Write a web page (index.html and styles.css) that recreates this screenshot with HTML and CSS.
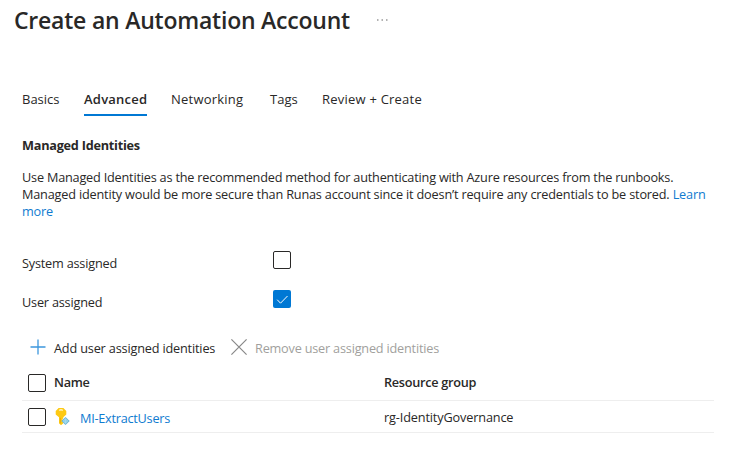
FILE: index.html
```html
<!DOCTYPE html>
<html lang="en">
<head>
<meta charset="utf-8">
<title>Create an Automation Account</title>
<link rel="stylesheet" href="styles.css">
</head>
<body>
<header class="header">
  <h1 class="title">Create an Automation Account</h1>
  <svg class="more" width="12" height="3" viewBox="0 0 12 3"><path d="M1 1h1.500M5.500 1h1.500M10 1h1.500" stroke="#666" stroke-width="1.2"/></svg>
</header>
<nav class="tabs">
  <a class="tab basics">Basics</a>
  <a class="tab advanced">Advanced</a>
  <a class="tab networking">Networking</a>
  <a class="tab tags">Tags</a>
  <a class="tab review">Review + Create</a>
</nav>
<main class="content">
  <h2 class="section-title">Managed Identities</h2>
  <p class="intro">Use Managed Identities as the recommended method for authenticating with Azure resources from the runbooks.<br><span class="line-two">Managed identity would be more secure than Runas account since it doesn’t require any credentials to be stored. <a class="link">Learn</a></span><br><a class="link">more</a></p>
  <div class="field"><span class="field-label">System assigned</span><span class="checkbox"></span></div>
  <div class="field"><span class="field-label">User assigned</span><span class="checkbox checked"><svg width="18" height="18" viewBox="0 0 18 18"><path d="M4.200 9.700l3.300 3.500 7-7.200" fill="none" stroke="#fff" stroke-width="1"/></svg></span></div>
  <div class="toolbar">
    <svg width="16" height="16" viewBox="0 0 16 16"><path d="M8 .5v15M.5 8h15" stroke="#3c97dd" stroke-width="1.3"/></svg>
    <span class="add">Add user assigned identities</span>
    <svg width="16" height="16" viewBox="0 0 16 16"><path d="M.4.4l15.200 15.200M15.600.4L.4 15.600" stroke="#888" stroke-width="1.2"/></svg>
    <span class="remove">Remove user assigned identities</span>
  </div>
  <div class="grid">
    <div class="row head">
      <span class="checkbox"></span>
      <span class="name">Name</span>
      <span class="group">Resource group</span>
    </div>
    <div class="row">
      <span class="checkbox"></span>
      <span class="name">
        <svg class="key" width="15" height="19" viewBox="0 0 15 19"><path d="M3.600 1h4.800L11.300 4v3.500L8.300 10.300v1l-1 1 1 1.100-1 1 .8 1v1L6 18.200l-2-2V10.300L.7 7.500V4z" fill="#fdc913"/><path d="M4.200 3.600q1.800-1.700 3.600 0" stroke="#fff4bd" stroke-width="1.4" fill="none"/><path d="M5.400 10.800v5.700" stroke="#e9a80b" stroke-width=".9"/><path d="M10.500 10l4.200 4-4.200 4-4.200-4z" fill="#6db6d6"/><path d="M10.500 11.600l2.400 2.400-2.400 2.400L8.100 14zM10.500 11.600v4.800" fill="#8ed2ec" stroke="#b7e3f2" stroke-width=".5"/></svg>
        <a class="link identity">MI-ExtractUsers</a>
      </span>
      <span class="group">rg-IdentityGovernance</span>
    </div>
  </div>
</main>
</body>
</html>
```
FILE: styles.css
```css
* { box-sizing: border-box; }
body {
  margin: 0;
  width: 747px;
  height: 455px;
  overflow: hidden;
  background: #fff;
  color: #292827;
  font: 12.7px/17px "Open Sans", "Noto Sans", sans-serif;
  letter-spacing: -.2px;
}
.header { display: flex; align-items: center; height: 40px; padding-left: 14px; }
.title { margin: 0; width: 362px; font-size: 23px; line-height: 30px; font-weight: 600; letter-spacing: -.22px; white-space: nowrap; }
.tabs { display: flex; height: 76px; padding: 50px 0 0 22px; font-size: 13px; letter-spacing: .22px; }
.tab { height: 26px; line-height: 18px; white-space: nowrap; }
.basics { width: 62px; letter-spacing: 0; }
.advanced { width: 63px; margin-right: 24px; font-weight: 600; border-bottom: 2px solid #0078d4; }
.networking { width: 99px; }
.tags { width: 52px; letter-spacing: 0; }
.content { padding: 21px 33px 0 22px; }
.section-title { margin: 0 0 15px; font-size: 12.7px; line-height: 17px; font-weight: 700; letter-spacing: -.24px; }
.intro { margin: 0 0 31px; white-space: nowrap; }
.line-two { letter-spacing: -.18px; }
.link { color: #0f7bd0; }
.field { display: flex; height: 39px; }
.field-label { width: 251px; padding-top: 4px; }
.checkbox { flex: none; width: 18px; height: 18px; border: 1px solid #292827; border-radius: 2px; }
.checkbox.checked { border: 0; background: #0078d4; }
.checked svg { display: block; }
.toolbar { display: flex; align-items: center; height: 36px; padding-left: 8px; white-space: nowrap; }
.add { width: 185px; padding: 2px 0 0 8px; letter-spacing: -.17px; }
.remove { padding: 2px 0 0 8px; color: #a19f9d; }
.row { display: grid; grid-template-columns: 26px 330px 1fr; align-items: center; height: 32px; padding-left: 6px; border-bottom: 1px solid #eee; }
.head { height: 36px; font-weight: 600; letter-spacing: -.27px; }
.name { display: flex; align-items: center; }
.key { margin-left: 1px; }
.identity { margin-left: 10px; padding-top: 3px; letter-spacing: -.25px; }
.row:not(.head) .group { padding-top: 2px; letter-spacing: -.14px; }
```
